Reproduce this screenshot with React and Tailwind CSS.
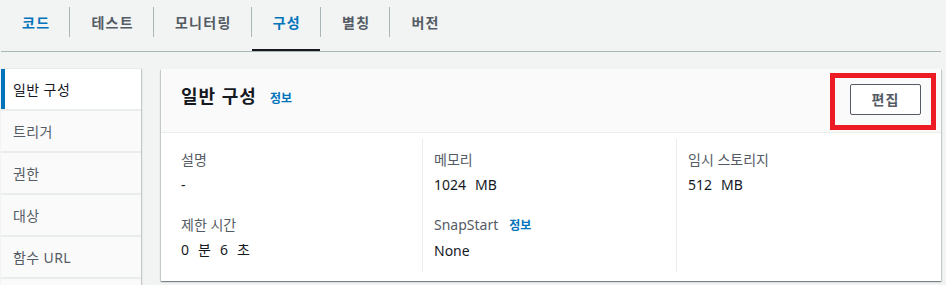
import React from 'react';

const tabs = ['코드', '테스트', '모니터링', '구성', '별칭', '버전'];
const sideItems = ['일반 구성', '트리거', '권한', '대상', '함수 URL', ''];

function Field({ label, info, children, className = '' }) {
  return (
    <div className={className}>
      <div className="flex items-baseline gap-[11px] leading-[22px] text-[#545b64]">
        <span>{label}</span>
        {info && <span className="text-[12px] font-bold text-[#0073bb]">정보</span>}
      </div>
      <div className="mt-[3px] flex leading-[22px] text-[#16191f]">{children}</div>
    </div>
  );
}

export default function App() {
  return (
    <div
      className="relative w-[946px] h-[285px] overflow-hidden bg-[#f2f3f3] text-[14px]"
      style={{ fontFamily: '"Noto Sans", "Noto Sans CJK KR", sans-serif' }}
    >
      {/* tabs */}
      <div className="ml-[1px] mr-[5px] flex h-[52px] border-b border-[#aab7b8]">
        {tabs.map((t, i) => (
          <React.Fragment key={t}>
            {i > 0 && <div className="mt-[7px] h-[30px] w-px bg-[#aab7b8]" />}
            <div className="flex flex-col">
              <div
                className={
                  'flex h-[45px] items-center pl-[21px] pr-[19px] font-bold tracking-[1.3px] ' +
                  (i === 0 || i === 3 ? 'text-[#0073bb]' : 'text-[#545b64]')
                }
              >
                {t}
              </div>
              <div className={'mt-[4px] h-[2px] ' + (i === 3 ? 'bg-[#16191f]' : '')} />
            </div>
          </React.Fragment>
        ))}
      </div>

      <div className="mt-[17px] flex gap-[20px] pl-[1px]">
        {/* side nav */}
        <div className="flex w-[140px] flex-col gap-[2px] bg-[#eaeded] shadow-[1px_0_1px_0_rgba(0,28,36,0.2)]">
          {sideItems.map((s, i) => (
            <div
              key={i}
              className={
                'flex h-[40px] shrink-0 items-center tracking-[0.4px] ' +
                (i === 0
                  ? 'border-l-4 border-[#0073bb] bg-white pl-[8px] text-[#16191f]'
                  : 'bg-[#fafafa] pl-[12px] text-[#545b64]')
              }
            >
              {s}
            </div>
          ))}
        </div>

        {/* card */}
        <div className="h-[212px] w-[780px] bg-white shadow-[0_1px_1px_0_rgba(0,28,36,0.3),1px_1px_1px_0_rgba(0,28,36,0.15),-1px_1px_1px_0_rgba(0,28,36,0.15)]">
          <div className="flex h-[64px] items-start justify-between border-b border-[#eaeded] bg-[#fafafa] px-[20px] pt-[14px]">
            <div className="flex items-baseline gap-[13px]">
              <h2 className="text-[18px] font-bold leading-[26px] tracking-[1px] text-[#16191f]">일반 구성</h2>
              <span className="text-[12px] font-bold text-[#0073bb]">정보</span>
            </div>
            <button className="mt-[1px] h-[31px] w-[71px] rounded-[2px] border border-[#545b64] bg-white text-[14px] font-bold tracking-[1px] text-[#545b64]">
              편집
            </button>
          </div>

          <div className="flex px-[20px] pt-[6px] pb-[10px]">
            <div className="w-[241px] pt-[10px] pb-[10px]">
              <Field label="설명">-</Field>
              <Field label="제한 시간" className="mt-[18px]">
                <span className="flex gap-[9px]">
                  <span>0</span>
                  <span>분</span>
                  <span>6</span>
                  <span>초</span>
                </span>
              </Field>
            </div>
            <div className="w-[254px] border-l border-[#eaeded] pl-[11px] pt-[10px] pb-[10px]">
              <Field label="메모리">
                <span className="flex gap-[9px]">
                  <span>1024</span>
                  <span>MB</span>
                </span>
              </Field>
              <Field label="SnapStart" info className="mt-[18px]">
                None
              </Field>
            </div>
            <div className="flex-1 border-l border-[#eaeded] pl-[11px] pt-[10px] pb-[10px]">
              <Field label="임시 스토리지">
                <span className="flex gap-[9px]">
                  <span>512</span>
                  <span>MB</span>
                </span>
              </Field>
            </div>
          </div>
        </div>
      </div>

      {/* annotation box */}
      <div className="absolute left-[830px] top-[73px] h-[57px] w-[106px] border-[5px] border-[#ed1c24]" />
    </div>
  );
}
